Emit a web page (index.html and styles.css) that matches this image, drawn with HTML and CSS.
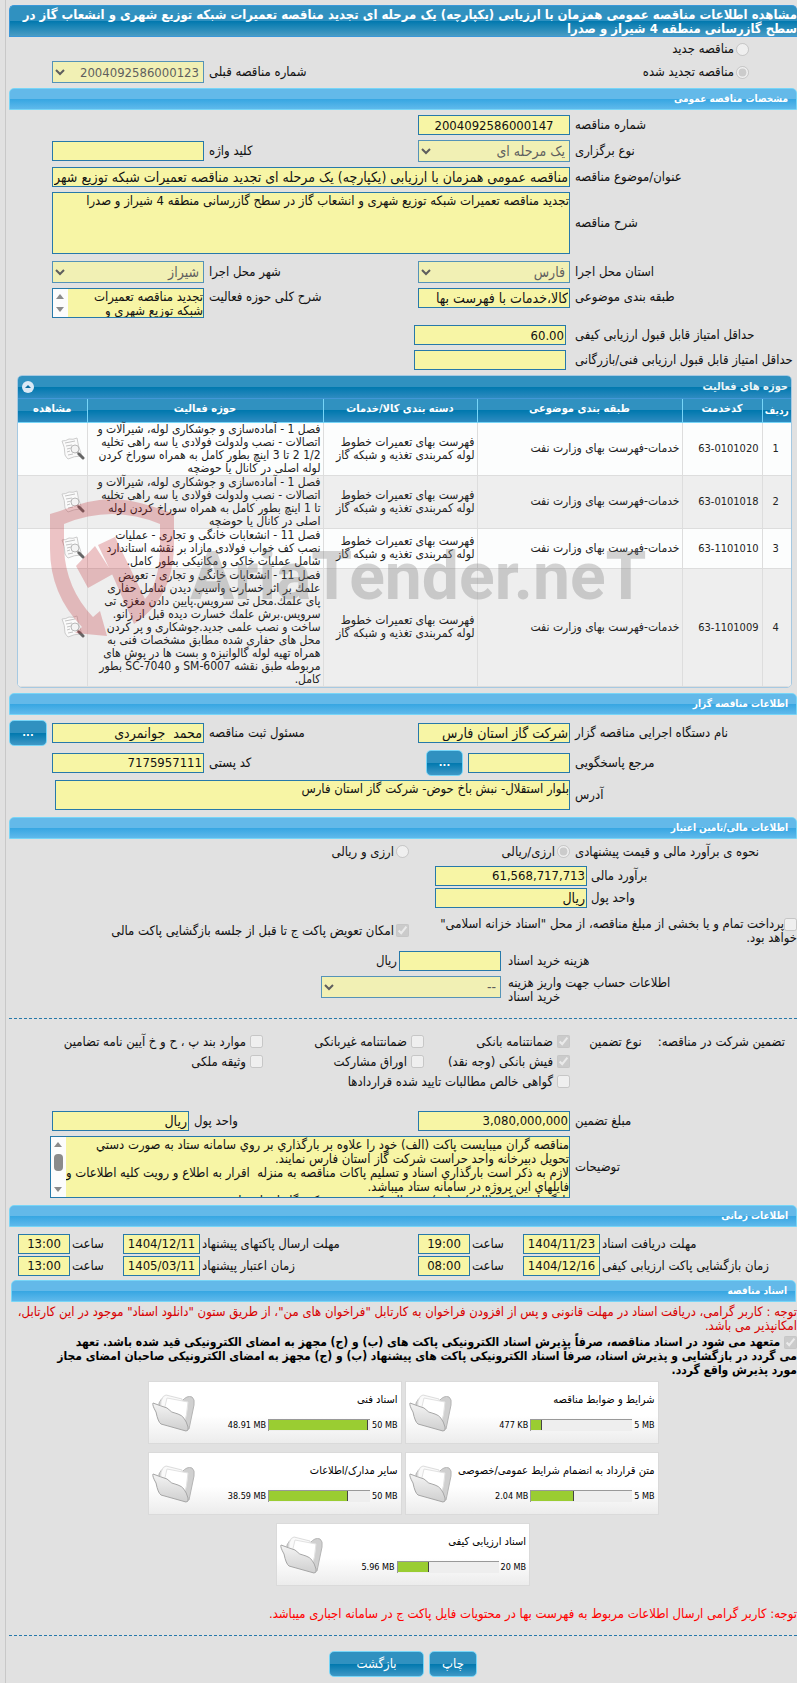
FILE: index.html
```
<!DOCTYPE html>
<html lang="fa" dir="rtl">
<head>
    <meta charset="UTF-8">
    <meta name="viewport" content="width=device-width, initial-scale=1.0">
    <title>مشاهده اطلاعات مناقصه عمومی</title>
    <link rel="stylesheet" href="styles.css">
</head>
<body>
<svg class="sprite" aria-hidden="true">
    <defs>
        <linearGradient id="folderFront" x1="0" y1="0" x2="0" y2="1">
            <stop offset="0" stop-color="#f4f4f4"/>
            <stop offset="1" stop-color="#cfcfcf"/>
        </linearGradient>
    </defs>
    <symbol id="icon-folder" viewBox="0 0 44 42">
        <path d="M8 12 Q10 7 14 6 L31 10 Q36 4 41 6 Q44 8 43 14 L38 38 L8 30 Z" fill="#d0d0d0" stroke="#b5b5b5"/>
        <path d="M10 10 Q12 4 15 4 L31 8 L34 26 L30 34 L9 26 Z" fill="#fafafa" stroke="#dcdcdc"/>
        <path d="M16 7 L37 11 Q36 25 33 33 L12 24 Z" fill="#fff" stroke="#e2e2e2"/>
        <path d="M2 12 Q1 14 5 21 Q7 31 10 33 L35 40 Q38 40 37 36 Q34 25 27 23 Q20 22 16 17 Q10 15 2 12 Z" fill="url(#folderFront)" stroke="#a6a6a6"/>
    </symbol>
    <symbol id="icon-view" viewBox="0 0 24 24">
        <path d="M1 4 Q5 4 8 2 Q12 3 16 1 Q17 9 20 16 L20 19 Q13 19 7 22 Q5 20 4 18 Q4 10 1 4 Z" fill="#fafafa" stroke="#ccc"/>
        <path d="M4 6 L14 4 M5 9 L11 8 M6 12 L10 11 M6 15 L9 14 M7 18 L12 17" fill="none" stroke="#c4c4c4"/>
        <circle cx="14" cy="12" r="4" fill="#f2f2f2" fill-opacity=".8" stroke="#b8b8b8"/>
        <path d="M16 15 L18 17" stroke="#aaa" stroke-width="2"/>
        <path d="M18 17 L22 21" stroke="#666" stroke-width="3" stroke-linecap="round"/>
    </symbol>
</svg>

<main id="page">
    <h1 class="page-title">مشاهده اطلاعات مناقصه عمومی همزمان با ارزیابی (یکپارچه) یک مرحله ای تجدید مناقصه تعمیرات شبکه توزیع شهری و انشعاب گاز در<br>سطح گازرسانی منطقه 4 شیراز و صدرا</h1>

    <div class="kind">
        <div class="choice"><input type="radio" name="kind" id="kind-new" disabled><label for="kind-new">مناقصه جدید</label></div>
    </div>
    <div class="row kind-row">
        <div class="choice kind-choice"><input type="radio" name="kind" id="kind-renew" checked disabled><label for="kind-renew">مناقصه تجدید شده</label></div>
        <label class="second" for="prev-number">شماره مناقصه قبلی</label>
        <select class="num" id="prev-number" disabled><option>2004092586000123</option></select>
    </div>

    <h2 class="bar">مشخصات مناقصه عمومی</h2>
    <div class="row">
        <label for="number">شماره مناقصه</label>
        <input class="num center" type="text" id="number" value="2004092586000147" readonly>
    </div>
    <div class="row">
        <label for="type">نوع برگزاری</label>
        <select id="type" disabled><option>یک مرحله ای</option></select>
        <label for="keyword">کلید واژه</label>
        <input type="text" id="keyword" readonly>
    </div>
    <div class="row">
        <label for="subject">عنوان/موضوع مناقصه</label>
        <input class="wide" type="text" id="subject" value="مناقصه عمومی همزمان با ارزیابی (یکپارچه) یک مرحله ای تجدید مناقصه تعمیرات شبکه توزیع شهری و انشعاب گاز در سطح گازرسانی منطقه 4 شیراز و صدرا" readonly>
    </div>
    <div class="row">
        <label for="description">شرح مناقصه</label>
        <textarea class="wide tall" id="description" readonly>تجدید مناقصه تعمیرات شبکه توزیع شهری و انشعاب گاز در سطح گازرسانی منطقه 4 شیراز و صدرا</textarea>
    </div>
    <div class="row place-row">
        <label for="province">استان محل اجرا</label>
        <select id="province" disabled><option>فارس</option></select>
        <label for="city">شهر محل اجرا</label>
        <select id="city" disabled><option>شیراز</option></select>
    </div>
    <div class="row row-top">
        <label for="category">طبقه بندی موضوعی</label>
        <input type="text" id="category" value="کالا،خدمات با فهرست بها" readonly>
        <label for="scope">شرح کلی حوزه فعالیت</label>
        <div class="scroll-box">
            <textarea class="short" id="scope" readonly>تجدید مناقصه تعمیرات شبکه توزیع شهری و انشعاب گاز</textarea>
            <span class="scroll-track"><i class="arrow-up"></i><i class="arrow-down"></i></span>
        </div>
    </div>
    <div class="row row-score">
        <label for="quality">حداقل امتیاز قابل قبول ارزیابی کیفی</label>
        <input class="num" type="text" id="quality" value="60.00" readonly>
    </div>
    <div class="row row-score">
        <label for="technical">حداقل امتیاز قابل قبول ارزیابی فنی/بازرگانی</label>
        <input type="text" id="technical" readonly>
    </div>

    <section class="grid-panel">
        <div class="grid-caption">
            <span>حوزه های فعالیت</span>
            <button type="button" class="collapse" aria-label="جمع کردن"><svg viewBox="0 0 12 12"><path d="M3 7 L6 4 L9 7 Z"/></svg></button>
        </div>
        <table>
            <colgroup>
                <col class="c-row"><col class="c-code"><col class="c-subject"><col class="c-group"><col class="c-scope"><col class="c-view">
            </colgroup>
            <thead>
            <tr><th class="narrow">ردیف</th><th>کدخدمت</th><th>طبقه بندی موضوعی</th><th>دسته بندی کالا/خدمات</th><th>حوزه فعالیت</th><th>مشاهده</th></tr>
            </thead>
            <tbody>
            <tr>
                <td class="center">1</td><td dir="ltr">63-0101020</td><td>خدمات-فهرست بهای وزارت نفت</td>
                <td>فهرست بهای تعمیرات خطوط<br>لوله کمربندی تغذیه و شبکه گاز</td>
                <td>فصل 1 - آماده‌سازی و جوشکاری لوله، شیرآلات و<br>اتصالات - نصب ولدولت فولادی یا سه راهی تخلیه<br>1/2 2 تا 3 اینچ بطور کامل به همراه سوراخ کردن<br>لوله اصلی در کانال یا حوضچه</td>
                <td><svg class="view"><use href="#icon-view"/></svg></td>
            </tr>
            <tr>
                <td class="center">2</td><td dir="ltr">63-0101018</td><td>خدمات-فهرست بهای وزارت نفت</td>
                <td>فهرست بهای تعمیرات خطوط<br>لوله کمربندی تغذیه و شبکه گاز</td>
                <td>فصل 1 - آماده‌سازی و جوشکاری لوله، شیرآلات و<br>اتصالات - نصب ولدولت فولادی یا سه راهی تخلیه<br>تا 1 اینچ بطور کامل به همراه سوراخ کردن لوله<br>اصلی در کانال یا حوضچه</td>
                <td><svg class="view"><use href="#icon-view"/></svg></td>
            </tr>
            <tr>
                <td class="center">3</td><td dir="ltr">63-1101010</td><td>خدمات-فهرست بهای وزارت نفت</td>
                <td>فهرست بهای تعمیرات خطوط<br>لوله کمربندی تغذیه و شبکه گاز</td>
                <td>فصل 11 - انشعابات خانگی و تجاری - عملیات<br>نصب کف خواب فولادی مازاد بر نقشه استاندارد<br>شامل عملیات خاکی و مکانیکی بطور کامل.</td>
                <td><svg class="view"><use href="#icon-view"/></svg></td>
            </tr>
            <tr>
                <td class="center">4</td><td dir="ltr">63-1101009</td><td>خدمات-فهرست بهای وزارت نفت</td>
                <td>فهرست بهای تعمیرات خطوط<br>لوله کمربندی تغذیه و شبکه گاز</td>
                <td>فصل 11 - انشعابات خانگی و تجاری - تعویض<br>علمك بر اثر خسارت وآسیب دیدن شامل حفاری<br>پای علمك.محل تی سرویس.پایین دادن مغزی تی<br>سرویس.برش علمك خسارت دیده قبل از زانو.<br>ساخت و نصب علمی جدید.جوشکاری و پر کردن<br>محل های حفاری شده مطابق مشخصات فنی به<br>همراه تهیه لوله گالوانیزه و بست ها در پوش های<br>مربوطه طبق نقشه SM-6007 و SC-7040 بطور<br>کامل.</td>
                <td><svg class="view"><use href="#icon-view"/></svg></td>
            </tr>
            </tbody>
        </table>
        <div class="watermark" dir="ltr">
            <svg viewBox="0 0 126 138">
                <path d="M0 15 L10 12 Q40 0 62 0 Q85 0 124 15 L124 50 Q122 100 84 125 L95 100 Q109 85 110 50 L110 25 Q62 5 14 25 L14 50 Q16 90 43 118 L50 112 L57 137 L25 134 L32 128 Q0 95 0 50 Z"/>
                <path d="M26 67 L45 47 L63 75 L38 89 Z M48 46 L65 38 L95 100 L84 125 L62 75 Z"/>
            </svg>
            <span>AriaTender.neT</span>
        </div>
    </section>

    <h2 class="bar">اطلاعات مناقصه گزار</h2>
    <div class="row row-owner">
        <label for="owner">نام دستگاه اجرایی مناقصه گزار</label>
        <input type="text" id="owner" value="شرکت گاز استان فارس" readonly>
        <label for="registrar">مسئول ثبت مناقصه</label>
        <input type="text" id="registrar" value="محمد  جوانمردی" readonly>
        <button type="button" class="btn more">...</button>
    </div>
    <div class="row row-contact">
        <label for="contact">مرجع پاسخگویی</label>
        <div class="with-button">
            <input type="text" id="contact" readonly>
            <button type="button" class="btn more">...</button>
        </div>
        <label for="postal">کد پستی</label>
        <input class="num" type="text" id="postal" value="7175957111" readonly>
    </div>
    <div class="row row-address">
        <label for="address">آدرس</label>
        <textarea class="wide short" id="address" readonly>بلوار استقلال- نبش باخ حوض- شرکت گاز استان فارس</textarea>
    </div>

    <h2 class="bar">اطلاعات مالی/تامین اعتبار</h2>
    <div class="row price-kind">
        <span class="label">نحوه ی برآورد مالی و قیمت پیشنهادی</span>
        <div class="choice"><input type="radio" name="price" id="price-1" checked disabled><label for="price-1">ارزی/ریالی</label></div>
        <div class="choice"><input type="radio" name="price" id="price-2" disabled><label for="price-2">ارزی و ریالی</label></div>
    </div>
    <div class="row row-money">
        <label for="estimate">برآورد مالی</label>
        <input class="num" type="text" id="estimate" value="61,568,717,713" readonly>
    </div>
    <div class="row row-money">
        <label for="currency">واحد پول</label>
        <input type="text" id="currency" value="ریال" readonly>
    </div>
    <div class="payment">
        <div><input type="checkbox" id="treasury" disabled><label for="treasury">پرداخت تمام و یا بخشی از مبلغ مناقصه، از محل "اسناد خزانه اسلامی"<br>خواهد بود.</label></div>
        <div class="choice"><input type="checkbox" id="swap" checked disabled><label for="swap">امکان تعویض پاکت ج تا قبل از جلسه بازگشایی پاکت مالی</label></div>
    </div>
    <div class="row row-cost">
        <label for="cost">هزینه خرید اسناد</label>
        <div class="choice"><input type="text" id="cost" readonly><span>ریال</span></div>
    </div>
    <div class="row row-account">
        <label for="account">اطلاعات حساب جهت واریز هزینه<br>خرید اسناد</label>
        <select id="account" disabled><option>--</option></select>
    </div>

    <hr>
    <div class="guarantee">
        <div class="guarantee-labels"><span>تضمین شرکت در مناقصه:</span><span>نوع تضمین</span></div>
        <div class="guarantee-types">
            <div class="choice"><input type="checkbox" id="g1" checked disabled><label for="g1">ضمانتنامه بانکی</label></div>
            <div class="choice"><input type="checkbox" id="g2" disabled><label for="g2">ضمانتنامه غیربانکی</label></div>
            <div class="choice"><input type="checkbox" id="g3" disabled><label for="g3">موارد بند پ ، ح و خ آیین نامه تضامین</label></div>
            <div class="choice"><input type="checkbox" id="g4" checked disabled><label for="g4">فیش بانکی (وجه نقد)</label></div>
            <div class="choice"><input type="checkbox" id="g5" disabled><label for="g5">اوراق مشارکت</label></div>
            <div class="choice"><input type="checkbox" id="g6" disabled><label for="g6">وثیقه ملکی</label></div>
            <div class="choice long"><input type="checkbox" id="g7" disabled><label for="g7">گواهی خالص مطالبات تایید شده قراردادها</label></div>
        </div>
    </div>
    <div class="row row-amount">
        <label for="amount">مبلغ تضمین</label>
        <input class="num" type="text" id="amount" value="3,080,000,000" readonly>
        <label for="amount-unit">واحد پول</label>
        <input type="text" id="amount-unit" value="ریال" readonly>
    </div>
    <div class="row row-notes">
        <label for="notes">توضیحات</label>
        <div class="scroll-box wide">
            <textarea class="tall lines" id="notes" readonly>مناقصه گران میبایست پاکت (الف) خود را علاوه بر بارگذاري بر روي سامانه ستاد به صورت دستي
تحویل دبیرخانه واحد حراست شرکت گاز استان فارس نمایند.
لازم به ذکر است بارگذاري اسناد و تسلیم پاکات مناقصه به منزله  اقرار به اطلاع و رویت کلیه اطلاعات و
فایلهاي این پروژه در سامانه ستاد میباشد.
بازگشایی پاکت (الف) و (ب) در سالن کمیسیون شرکت گاز استان فارس</textarea>
            <span class="scroll-track"><i class="arrow-up"></i><i class="thumb"></i><i class="arrow-down"></i></span>
        </div>
    </div>

    <h2 class="bar">اطلاعات زمانی</h2>
    <div class="times">
        <label for="d1">مهلت دریافت اسناد</label><input class="num" type="text" id="d1" value="1404/11/23" readonly>
        <label for="t1">ساعت</label><input class="num" type="text" id="t1" value="19:00" readonly>
        <label for="d2">مهلت ارسال پاکتهای پیشنهاد</label><input class="num" type="text" id="d2" value="1404/12/11" readonly>
        <label for="t2">ساعت</label><input class="num" type="text" id="t2" value="13:00" readonly>
        <label for="d3">زمان بازگشایی پاکت ارزیابی کیفی</label><input class="num" type="text" id="d3" value="1404/12/16" readonly>
        <label for="t3">ساعت</label><input class="num" type="text" id="t3" value="08:00" readonly>
        <label for="d4">زمان اعتبار پیشنهاد</label><input class="num" type="text" id="d4" value="1405/03/11" readonly>
        <label for="t4">ساعت</label><input class="num" type="text" id="t4" value="13:00" readonly>
    </div>

    <h2 class="bar docs-bar">اسناد مناقصه</h2>
    <p class="notice">توجه : کاربر گرامی، دریافت اسناد در مهلت قانونی و پس از افزودن فراخوان به کارتابل "فراخوان های من"، از طریق ستون "دانلود اسناد" موجود در این کارتابل، امکانپذیر می باشد.</p>
    <div class="commit"><input type="checkbox" id="commit" checked disabled> <label for="commit">متعهد می شود در اسناد مناقصه، صرفاً پذیرش اسناد الکترونیکی پاکت های (ب) و (ج) مجهز به امضای الکترونیکی قید شده باشد. تعهد<br>می گردد در بازگشایی و پذیرش اسناد، صرفاً اسناد الکترونیکی پاکت های پیشنهاد (ب) و (ج) مجهز به امضای الکترونیکی صاحبان امضای مجاز<br>مورد پذیرش واقع گردد.</label></div>

    <div class="docs">
        <div class="doc">
            <div class="doc-info"><div class="doc-name">شرایط و ضوابط مناقصه</div>
                <div class="usage"><span>5 MB</span><div class="meter"><i style="width: 11%"></i></div><span>477 KB</span></div></div>
            <svg class="folder"><use href="#icon-folder"/></svg>
        </div>
        <div class="doc">
            <div class="doc-info"><div class="doc-name">اسناد فنی</div>
                <div class="usage"><span>50 MB</span><div class="meter"><i style="width: 98%"></i></div><span>48.91 MB</span></div></div>
            <svg class="folder"><use href="#icon-folder"/></svg>
        </div>
        <div class="doc">
            <div class="doc-info"><div class="doc-name">متن قرارداد به انضمام شرایط عمومی/خصوصی</div>
                <div class="usage"><span>5 MB</span><div class="meter"><i style="width: 42%"></i></div><span>2.04 MB</span></div></div>
            <svg class="folder"><use href="#icon-folder"/></svg>
        </div>
        <div class="doc">
            <div class="doc-info"><div class="doc-name">سایر مدارک/اطلاعات</div>
                <div class="usage"><span>50 MB</span><div class="meter"><i style="width: 78%"></i></div><span>38.59 MB</span></div></div>
            <svg class="folder"><use href="#icon-folder"/></svg>
        </div>
        <div class="doc">
            <div class="doc-info"><div class="doc-name">اسناد ارزیابی کیفی</div>
                <div class="usage"><span>20 MB</span><div class="meter"><i style="width: 31%"></i></div><span>5.96 MB</span></div></div>
            <svg class="folder"><use href="#icon-folder"/></svg>
        </div>
    </div>

    <p class="notice bright">توجه: کاربر گرامی ارسال اطلاعات مربوط به فهرست بها در محتویات فایل پاکت ج در سامانه اجباری میباشد.</p>
    <hr>
    <div class="actions">
        <button type="button" class="btn">چاپ</button>
        <button type="button" class="btn back">بازگشت</button>
    </div>
</main>
</body>
</html>
```
FILE: styles.css
```
* {
    box-sizing: border-box;
}

body {
    margin: 0;
    background-color: #e1e1e1;
    color: #111;
    font-family: Tahoma, "DejaVu Sans Condensed", "DejaVu Sans", sans-serif;
    font-size: 13px;
    line-height: 14px;
}

.sprite {
    position: absolute;
    width: 0;
    height: 0;
}

#page {
    min-height: 100vh;
    margin-left: 5px;
    border-left: 1px solid #c8c8c8;
    padding: 5px 0 5px 3px;
}

.page-title {
    margin: 0;
    padding: 2px 0 0;
    min-height: 32px;
    border: 1px solid #3a97d8;
    border-right: 0;
    border-radius: 5px 5px 0 0;
    background: linear-gradient(#3091c0 50%, #0078ae 50%, #4a9cc4);
    color: #fff;
    font-size: 13px;
    line-height: 14px;
}

.bar {
    margin: 0 0 5px;
    padding: 0 8px;
    height: 22px;
    border: 1px solid #77d5f7;
    border-radius: 5px 5px 0 0;
    background: linear-gradient(#63b9e9 50%, #36a6e2 50%, #5fb9eb);
    color: #fff;
    font-size: 10px;
    line-height: 20px;
}

.docs-bar {
    margin: 0 1px 3px 2px;
}

/* form rows */
.row {
    display: grid;
    grid-template-columns: 222px 152px 1fr 152px;
    column-gap: 5px;
    align-items: center;
    padding-left: 43px;
    margin-bottom: 5px;
}

.row > label,
.row > .label {
    text-align: left;
    white-space: nowrap;
}

.row .second {
    grid-column: 3;
}

.row-top {
    align-items: start;
    margin-bottom: 7px;
}

.row-top > label {
    padding-top: 2px;
}

input[type="text"],
textarea,
select {
    display: block;
    width: 100%;
    margin: 0;
    border: 1px solid #2779aa;
    border-radius: 0;
    background-color: #f7f5a5;
    color: #111;
    font-family: inherit;
    font-size: 14px;
}

input[type="text"] {
    height: 20px;
    padding: 1px;
}

select {
    height: 22px;
}

input.num,
select.num {
    font-size: 13px;
}

select:disabled {
    color: #333;
    opacity: .75;
}

textarea {
    padding: 1px 0;
    font-size: 13px;
    line-height: 14px;
    resize: none;
    overflow: hidden;
}

textarea.lines {
    white-space: pre;
}

input[type="radio"],
input[type="checkbox"] {
    width: 13px;
    height: 13px;
    margin: 0;
    flex: none;
}

.center,
.times input[type="text"] {
    text-align: center;
}

.wide {
    grid-column: 2 / 5;
}

.tall {
    height: 62px;
}

.short {
    height: 30px;
}

.choice {
    display: flex;
    align-items: center;
    gap: 2px;
    white-space: nowrap;
}

.kind {
    padding: 5px 48px 5px 0;
}

.kind-choice {
    padding-right: 48px;
}

.place-row {
    padding-top: 2px;
}

.row-score {
    grid-template-columns: 222px 152px 1fr;
    column-gap: 9px;
}

/* text boxes with a scroll bar */
.scroll-box {
    position: relative;
}

.scroll-box textarea {
    padding-left: 16px;
}

.scroll-track {
    position: absolute;
    top: 1px;
    bottom: 1px;
    left: 1px;
    width: 15px;
    background-color: #fcfcfc;
}

.scroll-track i {
    position: absolute;
    left: 3px;
    border: 4px solid transparent;
}

.scroll-track .arrow-up {
    top: 5px;
    border-top: 0;
    border-bottom: 5px solid #8b8b8b;
}

.scroll-track .arrow-down {
    bottom: 5px;
    border-bottom: 0;
    border-top: 5px solid #8b8b8b;
}

.scroll-track .thumb {
    top: 17px;
    width: 9px;
    height: 17px;
    border: 0;
    border-radius: 4px;
    background-color: #8b8b8b;
}

/* activity table */
.grid-panel {
    position: relative;
    margin: 0 5px 5px 8px;
    border: 1px solid #a6c9e2;
    border-radius: 5px;
    background-color: #fcfdfd;
    overflow: hidden;
    color: #222;
}

.grid-caption {
    display: flex;
    justify-content: space-between;
    align-items: center;
    height: 23px;
    padding: 0 3px 0 4px;
    border-bottom: 1px solid #4297d7;
    background: linear-gradient(#3091c0 50%, #0078ae 50%, #2e8bc0);
    color: #eaf5f7;
    font-size: 11px;
    font-weight: bold;
}

.collapse {
    width: 12px;
    height: 12px;
    padding: 0;
    border: 0;
    border-radius: 50%;
    background-color: #dbe9f5;
}

.collapse svg {
    display: block;
    width: 12px;
    height: 12px;
    fill: #0a6ca0;
}

.grid-panel table {
    width: 100%;
    border-collapse: collapse;
    table-layout: fixed;
    font-size: 12px;
    line-height: 13px;
}

.c-row { width: 29px; }
.c-code { width: 80px; }
.c-subject { width: 205px; }
.c-group { width: 154px; }
.c-view { width: 69px; }

.grid-panel th {
    height: 23px;
    padding: 0 1px 3px;
    border-left: 1px solid #77d5f7;
    border-bottom: 1px solid #77d5f7;
    background: linear-gradient(#3091c0 50%, #0078ae 50%, #2e8bc0);
    color: #fff;
    font-size: 11px;
    white-space: nowrap;
}

.grid-panel th.narrow {
    padding: 0;
    font-size: 10px;
}

.grid-panel td {
    padding: 0 2px 0 0;
    border-left: 1px solid #ddd;
    border-bottom: 1px solid #ddd;
    white-space: nowrap;
    text-align: right;
}

.grid-panel td[dir="ltr"] {
    padding-right: 3px;
    font-size: 11px;
}

.grid-panel td.center {
    text-align: center;
    font-size: 11px;
}

.grid-panel tbody tr:nth-child(even) {
    background-color: #eee;
}

.grid-panel th:last-child,
.grid-panel td:last-child {
    border-left: 0;
}

.view {
    display: block;
    width: 24px;
    height: 24px;
}

.watermark {
    position: absolute;
    left: 32px;
    bottom: 50px;
    display: flex;
    align-items: center;
    gap: 14px;
    font-family: Roboto, "Liberation Sans", sans-serif;
    font-size: 66px;
    font-weight: bold;
    line-height: 66px;
    color: rgba(120, 120, 120, .32);
    pointer-events: none;
}

.watermark span {
    padding-top: 18px;
}

.watermark svg {
    width: 126px;
    height: 138px;
    fill: rgba(190, 30, 40, .26);
}

/* buttons */
.btn {
    height: 26px;
    min-width: 48px;
    padding: 0;
    border: 1px solid #77d5f7;
    border-radius: 5px;
    background: linear-gradient(#3091c0 50%, #0078ae 50%, #3f98c6);
    color: #fff;
    font-family: inherit;
    font-size: 13px;
}

.more {
    min-width: 37px;
    font-size: 11px;
    font-weight: bold;
}

.back {
    min-width: 95px;
}

.row-owner {
    grid-template-columns: 222px 152px 1fr 152px 38px;
    padding-left: 0;
    margin-bottom: 4px;
}

.with-button {
    display: flex;
    justify-content: space-between;
    align-items: center;
    width: 144px;
}

.with-button input[type="text"] {
    width: 102px;
}

.row-contact {
    margin-bottom: 4px;
}

.row-address {
    padding-left: 46px;
    margin-bottom: 7px;
}

/* financial part */
.price-kind {
    grid-template-columns: 222px 156px 1fr;
    padding: 1px 0 3px;
    margin-bottom: 4px;
}

.row-money {
    grid-template-columns: 206px 152px;
    column-gap: 4px;
    margin-bottom: 2px;
}

.payment {
    display: grid;
    grid-template-columns: 388px 1fr;
    align-items: center;
    padding: 7px 0 6px;
}

.payment input {
    vertical-align: bottom;
}

.row-cost,
.row-account {
    grid-template-columns: 289px 180px;
    column-gap: 7px;
}

.row-account {
    align-items: start;
}

.row-cost input[type="text"] {
    width: 102px;
}

hr {
    margin: 14px 0 0;
    border: 0;
    border-top: 1px dashed #2779aa;
}

.guarantee {
    display: grid;
    grid-template-columns: 227px 1fr;
    padding: 14px 0 20px;
}

.guarantee-labels {
    display: flex;
    gap: 16px;
    padding: 2px 12px 0 0;
    white-space: nowrap;
}

.guarantee-types {
    display: grid;
    grid-template-columns: 146px 161px 1fr;
    row-gap: 2px;
}

.guarantee-types .choice {
    height: 18px;
    gap: 4px;
}

.guarantee-types .long {
    grid-column: 1 / 4;
}

.row-amount {
    grid-template-columns: 222px 152px 1fr 137px;
}

.row-notes {
    padding-left: 41px;
    margin-bottom: 7px;
}

.times {
    display: grid;
    grid-template-columns: 195px 77px 49px 52px 1fr 77px 49px 52px;
    gap: 2px;
    align-items: center;
    padding: 2px 0 4px 9px;
}

.times label {
    text-align: left;
    white-space: nowrap;
}

/* documents */
.notice {
    margin: 0;
    color: #d80000;
}

.notice.bright {
    margin-top: 21px;
    color: #f00;
}

.commit {
    padding-top: 2px;
    font-size: 12px;
    font-weight: bold;
    color: #000;
}

.commit input {
    vertical-align: bottom;
}

.docs {
    display: flex;
    flex-wrap: wrap;
    justify-content: center;
    gap: 8px 3px;
    max-width: 520px;
    margin: 4px auto 0;
}

.doc {
    display: flex;
    justify-content: space-between;
    align-items: center;
    width: 254px;
    height: 63px;
    padding: 0 3px 0 2px;
    border: 1px solid #dadada;
    background: linear-gradient(#fff 55%, #ececec);
    color: #000;
    font-size: 9px;
    line-height: 12px;
}

.doc-name {
    margin-bottom: 13px;
    font-size: 11px;
    white-space: nowrap;
}

.usage {
    display: flex;
    align-items: center;
    gap: 2px;
    direction: ltr;
    flex-direction: row-reverse;
    justify-content: flex-start;
}

.meter {
    width: 102px;
    height: 12px;
    border-top: 1px solid #999;
    border-left: 1px solid #999;
    background-color: #eee;
}

.meter i {
    display: block;
    height: 10px;
    border-right: 1px solid #444;
    background-color: #9acd32;
}

.folder {
    width: 44px;
    height: 42px;
}

.notice + hr {
    margin-top: 14px;
}

.actions {
    display: flex;
    justify-content: center;
    gap: 5px;
    padding-top: 15px;
}
```
